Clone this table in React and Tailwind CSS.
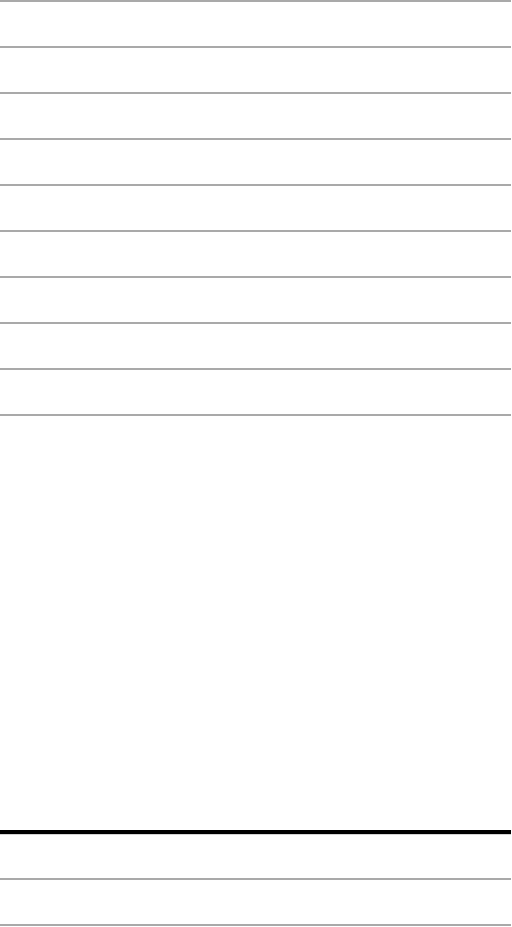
import React from 'react';

function Row() {
  return <div className="h-[46px] border-b-2 border-b-[#a9a9a9]" />;
}

export default function App() {
  const topRows = Array.from({ length: 9 });

  return (
    <div className="w-[512px] h-[927px] bg-white font-['Liberation_Sans',sans-serif] overflow-hidden">
      {/* top list */}
      <div className="w-[511px] border-t-2 border-t-[#a9a9a9]">
        {topRows.map((_, i) => (
          <Row key={i} />
        ))}
      </div>

      {/* empty space */}
      <div className="h-[414px]" />

      {/* bottom list */}
      <div className="w-[511px] border-t-4 border-t-black">
        <div className="h-px bg-[#d4d4d4]" />
        <div className="h-[45px] border-b-2 border-b-[#a9a9a9]" />
        <Row />
      </div>
    </div>
  );
}
